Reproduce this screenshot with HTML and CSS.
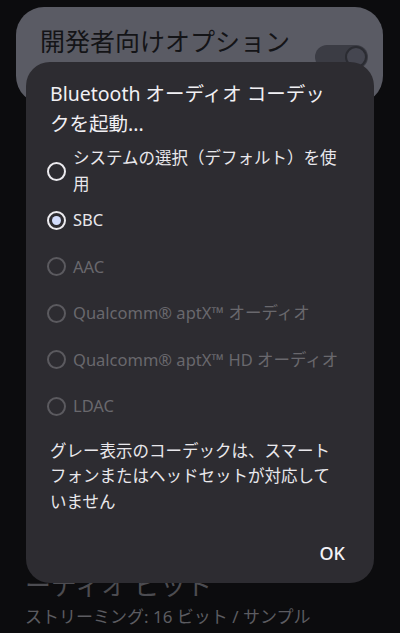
FILE: index.html
```html
<!DOCTYPE html>
<html lang="ja">

<head>
    <meta charset="UTF-8">
    <meta name="viewport" content="width=device-width, initial-scale=1.0">
    <title>開発者向けオプション</title>
    <link rel="stylesheet" href="styles.css">
</head>

<body>
    <!-- Settings page behind the dialog -->
    <div class="page">
        <div class="settings-card">
            <div class="card-title">開発者向けオプション</div>
            <div class="toggle"><span class="thumb"></span></div>
        </div>

        <div class="pref-list">
            <div class="pref-title">ーディオ ビット</div>
            <div class="pref-summary">ストリーミング: 16 ビット / サンプル</div>
        </div>
    </div>

    <!-- Codec dialog -->
    <div class="dialog">
        <div class="dialog-title">Bluetooth オーディオ コーデックを起動...</div>

        <div class="radio-list">
            <label class="radio-item">
                <span class="radio"></span>
                <span class="radio-text">システムの選択（デフォルト）を使用</span>
            </label>
            <label class="radio-item">
                <span class="radio checked"></span>
                <span class="radio-text">SBC</span>
            </label>
            <label class="radio-item disabled">
                <span class="radio"></span>
                <span class="radio-text">AAC</span>
            </label>
            <label class="radio-item disabled">
                <span class="radio"></span>
                <span class="radio-text">Qualcomm® aptX™ オーディオ</span>
            </label>
            <label class="radio-item disabled">
                <span class="radio"></span>
                <span class="radio-text">Qualcomm® aptX™ HD オーディオ</span>
            </label>
            <label class="radio-item disabled">
                <span class="radio"></span>
                <span class="radio-text">LDAC</span>
            </label>
        </div>

        <p class="dialog-note">グレー表示のコーデックは、スマートフォンまたはヘッドセットが対応していません</p>

        <div class="dialog-actions">
            <button class="text-button">OK</button>
        </div>
    </div>
</body>

</html>
```

FILE: styles.css
```css
body {
    margin: 0;
    width: 400px;
    height: 633px;
    overflow: hidden;
    background-color: #0c0c0e;
    font-family: "Noto Sans", "Noto Sans CJK JP", sans-serif;
    position: relative;
}

.page {
    padding-top: 7px;
}

/* Top card with main switch */
.settings-card {
    margin: 0 17px 0 16px;
    height: 97px;
    box-sizing: border-box;
    padding: 16px 15px 0 24px;
    border-radius: 28px;
    background-color: #5a5b64;
    display: flex;
    justify-content: space-between;
    align-items: flex-start;
}

.card-title {
    font-size: 25px;
    line-height: 36px;
    color: #141417;
}

.toggle {
    margin-top: 22px;
    width: 53px;
    height: 24px;
    border-radius: 12px;
    background-color: #3b3c44;
    display: flex;
    justify-content: flex-end;
    align-items: center;
    padding-right: 1px;
    box-sizing: border-box;
}

.thumb {
    width: 18px;
    height: 18px;
    border-radius: 50%;
    border: 2px solid #2b2c32;
    background-color: #454650;
}

.pref-list {
    margin-top: 464px;
    padding-left: 25px;
}

.pref-title {
    font-size: 26px;
    line-height: 34px;
    color: #4c4c51;
}

.pref-summary {
    margin-top: 3px;
    font-size: 17px;
    line-height: 24px;
    color: #5c5c61;
}

/* Dialog */
.dialog {
    position: absolute;
    left: 26px;
    top: 62px;
    width: 348px;
    height: 521px;
    box-sizing: border-box;
    padding: 17px 32px 0 24px;
    border-radius: 24px;
    background-color: #2d2c31;
    display: flex;
    flex-direction: column;
}

.dialog-title {
    margin-right: 6px;
    font-size: 19.5px;
    line-height: 30px;
    color: #f1f0f4;
}

.radio-list {
    margin-top: 6px;
}

.radio-item {
    min-height: 46.5px;
    display: flex;
    align-items: center;
    font-size: 16.5px;
    line-height: 26px;
    color: #e9e8ec;
}

.radio {
    flex: none;
    width: 15px;
    height: 15px;
    margin-left: -3px;
    margin-right: 7px;
    border: 2px solid #ecebef;
    border-radius: 50%;
    display: flex;
    align-items: center;
    justify-content: center;
}

.radio.checked::after {
    content: "";
    width: 9px;
    height: 9px;
    border-radius: 50%;
    background-color: #d2dcfb;
}

.radio-item.disabled {
    color: #69686d;
}

.radio-item.disabled .radio {
    border-color: #5b5a5f;
}

.dialog-note {
    margin: 8px 0 0;
    font-size: 16.5px;
    line-height: 25.5px;
    color: #e9e8ec;
}

.dialog-actions {
    margin-top: auto;
    padding-bottom: 10px;
    display: flex;
    justify-content: flex-end;
}

.text-button {
    height: 40px;
    margin-right: -11px;
    padding: 0 8px;
    border: none;
    background: none;
    font-family: "Noto Sans", sans-serif;
    font-size: 18px;
    font-weight: 500;
    color: #f3f2f6;
}
```
